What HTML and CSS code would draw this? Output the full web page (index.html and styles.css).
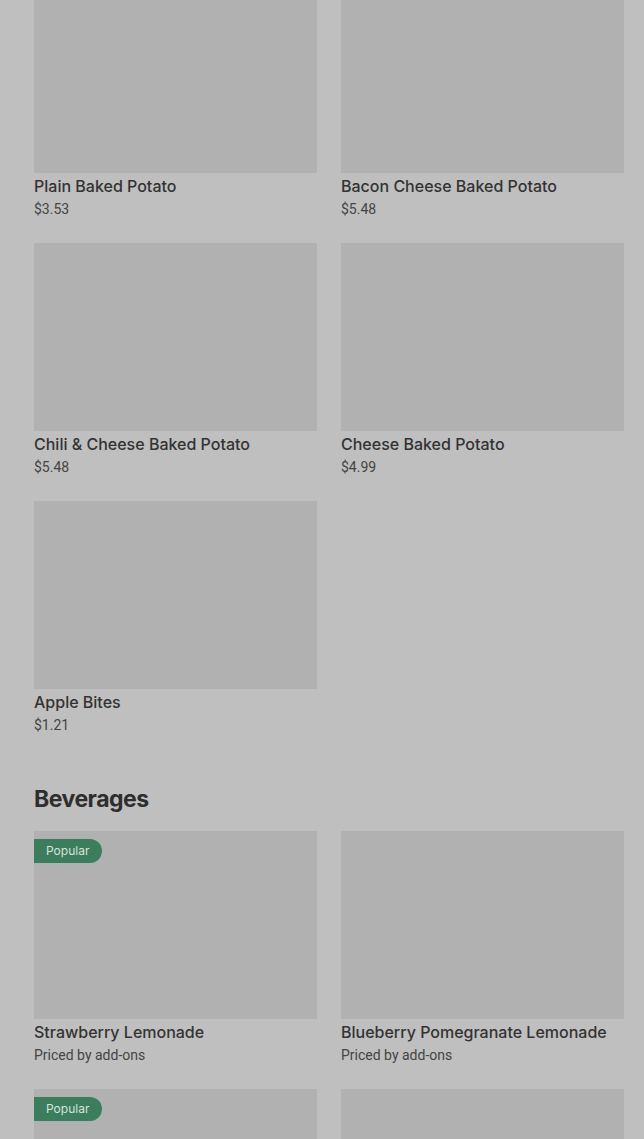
FILE: index.html
```html
<!DOCTYPE html>
<html lang="en">
<head>
<meta charset="utf-8">
<title>Menu</title>
<link rel="stylesheet" href="styles.css">
</head>
<body>
<main class="menu">
  <section class="section first">
    <div class="grid">
      <div class="card"><div class="thumb"></div><div class="name">Plain Baked Potato</div><div class="price">$3.53</div></div>
      <div class="card"><div class="thumb"></div><div class="name">Bacon Cheese Baked Potato</div><div class="price">$5.48</div></div>
      <div class="card"><div class="thumb"></div><div class="name">Chili &amp; Cheese Baked Potato</div><div class="price">$5.48</div></div>
      <div class="card"><div class="thumb"></div><div class="name">Cheese Baked Potato</div><div class="price">$4.99</div></div>
      <div class="card"><div class="thumb"></div><div class="name">Apple Bites</div><div class="price">$1.21</div></div>
    </div>
  </section>
  <section class="section">
    <h2 class="heading">Beverages</h2>
    <div class="grid">
      <div class="card"><div class="thumb"><span class="badge">Popular</span></div><div class="name">Strawberry Lemonade</div><div class="price">Priced by add-ons</div></div>
      <div class="card"><div class="thumb"></div><div class="name">Blueberry Pomegranate Lemonade</div><div class="price">Priced by add-ons</div></div>
      <div class="card"><div class="thumb"><span class="badge">Popular</span></div><div class="name">Watermelon Lemonade</div><div class="price">Priced by add-ons</div></div>
      <div class="card"><div class="thumb"></div><div class="name">Peach Lemonade</div><div class="price">Priced by add-ons</div></div>
    </div>
  </section>
</main>
</body>
</html>
```
FILE: styles.css
```css
html, body {
  margin: 0;
  padding: 0;
  background: #bfbfbf;
}
body {
  font-family: Inter, "Liberation Sans", sans-serif;
  color: #333333;
  overflow: hidden;
}
.menu {
  padding: 0 20px 0 34px;
}
.section.first {
  margin-top: -15px;
}
.grid {
  display: grid;
  grid-template-columns: 283px 283px;
  column-gap: 24px;
  row-gap: 22px;
}
.card {
  display: flex;
  flex-direction: column;
}
.thumb {
  position: relative;
  height: 188px;
  background: #b1b1b1;
}
.name {
  margin-top: 1px;
  font-size: 16px;
  line-height: 24px;
  font-weight: 500;
  color: #333333;
}
.price {
  margin-bottom: 1px;
  font-family: Roboto, "Liberation Sans", sans-serif;
  font-size: 14px;
  line-height: 22px;
  color: #444444;
}
.heading {
  margin: 44px 0 14px;
  font-size: 23px;
  line-height: 36px;
  font-weight: 700;
  letter-spacing: -0.5px;
  color: #2e2e2e;
}
.badge {
  position: absolute;
  top: 8px;
  left: 0;
  height: 24px;
  line-height: 24px;
  padding: 0 13px 0 12px;
  background: #3b7d5c;
  color: #d6e3da;
  font-size: 12px;
  border-radius: 0 12px 12px 0;
}
```
